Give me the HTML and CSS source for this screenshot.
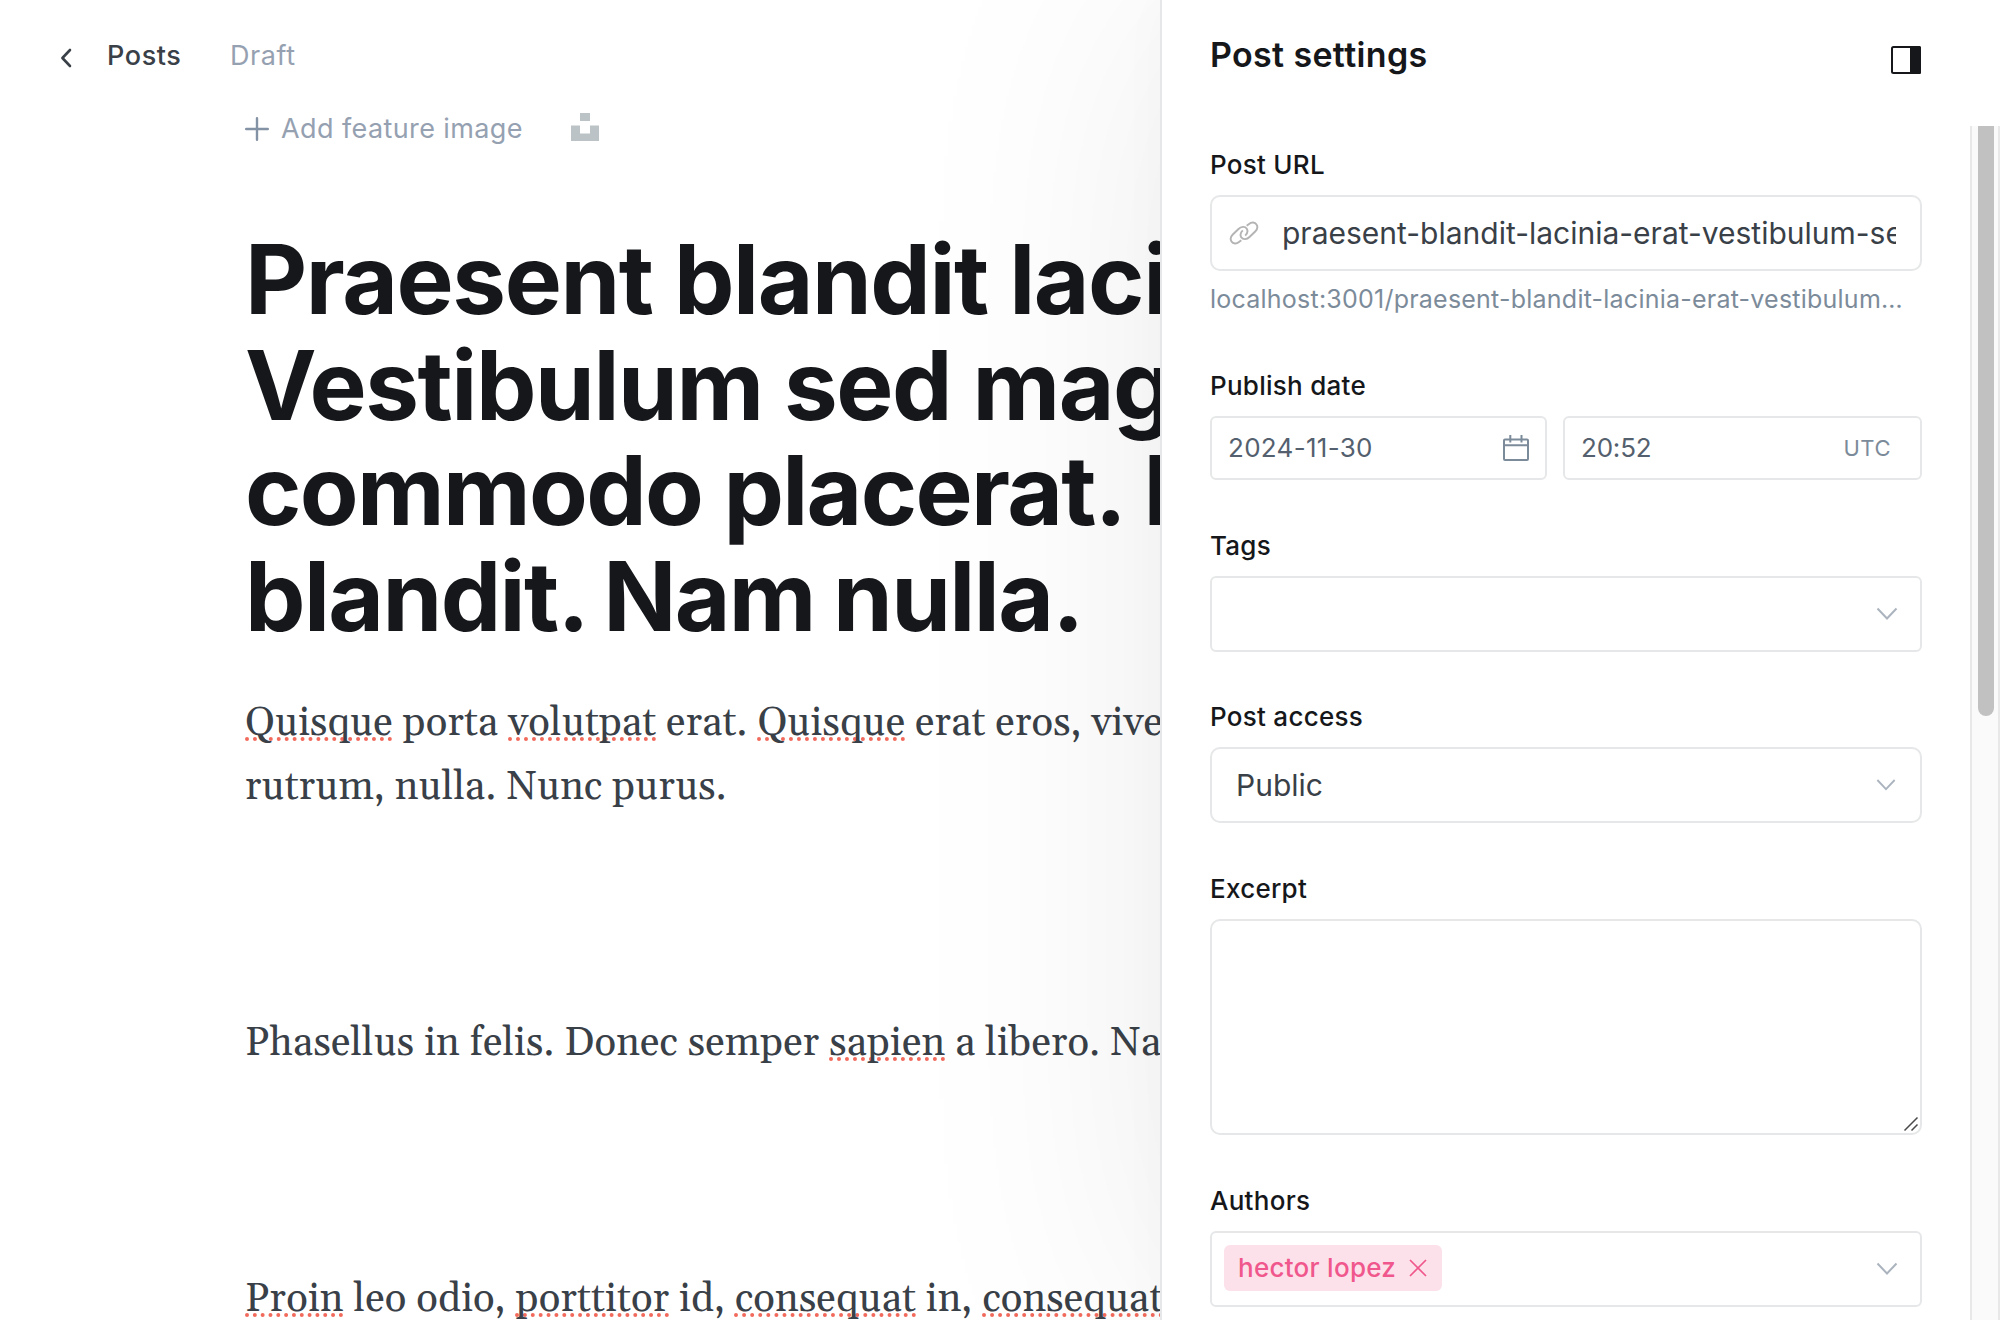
FILE: index.html
```html
<!DOCTYPE html>
<html lang="en">
<head>
<meta charset="utf-8">
<title>Post editor</title>
<link rel="stylesheet" href="styles.css">
</head>
<body>
<div class="app">
  <main class="editor">
    <header class="editor-nav">
      <svg class="back-icon" viewBox="0 0 12 20" width="12" height="20"><path d="M10 2 2.4 10l7.6 8"/></svg>
      <a class="nav-posts">Posts</a>
      <span class="nav-status">Draft</span>
    </header>
    <div class="canvas">
      <div class="feature-row">
        <svg class="plus-icon" viewBox="0 0 24 24" width="24" height="24"><path d="M12 1.2v21.6M1.2 12h21.6"/></svg>
        <span class="feature-label">Add feature image</span>
        <svg class="unsplash-icon" viewBox="0 0 28 28" width="28" height="28"><path d="M9 0h10v8H9zM0 12.5h9v8h10v-8h9V28H0z"/></svg>
      </div>
      <h1 class="title"><span class="loose">Praesent blandit lacinia erat.<br>Vestibulum sed magna at nunc</span><br>commodo placerat. Praesent<br><span class="snug">blandit. Nam nulla.</span></h1>
      <div class="body-text">
        <p><span class="misspelt">Quisque</span> porta <span class="misspelt">volutpat</span> erat. <span class="misspelt">Quisque</span> erat eros, viverra<br>rutrum, nulla. Nunc purus.</p>
        <p><br></p>
        <p>Phasellus in felis. Donec semper <span class="misspelt">sapien</span> a libero. Nam</p>
        <p><br></p>
        <p><span class="misspelt">Proin</span> leo odio, <span class="misspelt">porttitor</span> id, <span class="misspelt">consequat</span> in, <span class="misspelt">consequat</span></p>
      </div>
    </div>
  </main>

  <aside class="panel">
    <header class="panel-head">
      <h2 class="panel-title">Post settings</h2>
      <svg class="sidebar-icon" viewBox="0 0 30 28" width="30" height="28"><rect x="1" y="1" width="28" height="26" rx="1.5"/><path d="M20 1h8.500a.5.5 0 0 1 .5.5v25a.5.5 0 0 1-.5.5H20z"/></svg>
    </header>
    <div class="panel-scroll">
      <form class="fields">
        <div class="field">
          <label class="label">Post URL</label>
          <div class="control large round url">
            <svg class="link-icon" viewBox="-1 -1 30 24" width="30" height="24"><path d="M11.300 18.200 9 20C6.500 22.200 3 22 1.500 19.500 0 17.200.8 14.500 2.800 12.500L8.500 7C11 4.500 15 4 16.800 6.800 18 9 17.500 11.500 15.200 13.600"/><path d="M16.700 3.800 19 2C21.500-.2 25 0 26.500 2.500 28 4.800 27.200 7.500 25.200 9.500L19.500 15C17 17.500 13 18 11.200 15.200 10 13 10.500 10.500 12.800 8.400"/></svg>
            <span class="url-value">praesent-blandit-lacinia-erat-vestibulum-sed-magna</span>
          </div>
          <p class="hint">localhost:3001/praesent-blandit-lacinia-erat-vestibulum…</p>
        </div>
        <div class="field">
          <label class="label">Publish date</label>
          <div class="date-row">
            <div class="control small date">
              <span class="date-value">2024-11-30</span>
              <svg class="calendar-icon" viewBox="0 0 26 26" width="26" height="26"><rect x="1" y="4.500" width="24" height="20.500" rx="1"/><path d="M1 10.300h24M7.300 0v7.500M18.500 0v7.500"/></svg>
            </div>
            <div class="control small time">
              <span class="time-value">20:52</span>
              <span class="zone">UTC</span>
            </div>
          </div>
        </div>
        <div class="field tags">
          <label class="label">Tags</label>
          <div class="control large">
            <svg class="chevron" viewBox="0 0 22 14" width="22" height="14"><path d="M1.500 1.500 11 11.500l9.500-10"/></svg>
          </div>
        </div>
        <div class="field">
          <label class="label">Post access</label>
          <div class="control large round select">
            <span class="select-value">Public</span>
            <svg class="chevron" viewBox="0 0 22 14" width="20" height="14"><path d="M1.500 1.500 11 11.500l9.500-10"/></svg>
          </div>
        </div>
        <div class="field">
          <label class="label">Excerpt</label>
          <div class="control round area">
            <svg class="grip" viewBox="0 0 16 16" width="16" height="16"><path d="M1.500 14.500l13-13M8.500 14.500l6-6"/></svg>
          </div>
        </div>
        <div class="field">
          <label class="label">Authors</label>
          <div class="control large authors">
            <span class="token">hector lopez
              <svg class="token-close" viewBox="0 0 18 18" width="18" height="18"><path d="M1 1l16 16M17 1 1 17"/></svg>
            </span>
            <svg class="chevron" viewBox="0 0 22 14" width="22" height="14"><path d="M1.500 1.500 11 11.500l9.500-10"/></svg>
          </div>
        </div>
      </form>
      <div class="scrollbar"><div class="thumb"></div></div>
    </div>
  </aside>
</div>
</body>
</html>
```
FILE: styles.css
```css
* { box-sizing: border-box; }
body {
  margin: 0;
  font-family: Inter, "Liberation Sans", sans-serif;
  color: #15171a;
  background: #fff;
}
svg { display: block; fill: none; flex: none; }
h1, h2, p { margin: 0; }
.app {
  display: flex;
  width: 2000px;
  height: 1320px;
  overflow: hidden;
}

/* Editor */
.editor {
  width: 1160px;
  flex: none;
  overflow: hidden;
  white-space: nowrap;
}
.editor-nav {
  display: flex;
  align-items: center;
  height: 111px;
  padding-left: 60px;
  font-size: 27px;
  line-height: 1;
  letter-spacing: .6px;
}
.back-icon { stroke: #394047; stroke-width: 2.6; stroke-linecap: round; stroke-linejoin: round; margin: 5px 35px 0 0; }
.nav-posts { width: 123px; font-weight: 500; color: #394047; }
.nav-status { color: #95a1b1; }
.canvas { padding-left: 245px; }
.feature-row {
  display: flex;
  align-items: center;
  height: 34px;
  font-size: 27px;
  letter-spacing: .4px;
  color: #95a1b1;
}
.plus-icon { stroke: #8492a5; stroke-width: 2.4; stroke-linecap: round; margin-top: 1px; }
.feature-label { width: 290px; margin-left: 12px; }
.unsplash-icon { fill: #bbc3c6; margin-top: -2px; }
.title {
  margin-top: 82px;
  font-size: 96px;
  font-weight: 700;
  line-height: 105.6px;
  letter-spacing: -1.65px;
}
.title .loose { letter-spacing: -1.4px; }
.title .snug { letter-spacing: -1.6px; word-spacing: -3px; }
.body-text {
  margin-top: 43px;
  font-family: Gelasio, Georgia, "Liberation Serif", serif;
  font-size: 40px;
  line-height: 64px;
  letter-spacing: .19px;
  color: #394047;
}
.body-text p { margin-bottom: 64px; }
.misspelt {
  text-decoration: underline dotted #f26a5c 4px;
  text-underline-offset: 2px;
  text-decoration-skip-ink: none;
}

/* Settings panel */
.panel {
  position: relative;
  display: flex;
  flex-direction: column;
  width: 840px;
  flex: none;
  background: #fff;
  border-left: 2px solid #e6e7e8;
  box-shadow: 0 0 400px rgba(0, 0, 0, .08), 0 0 50px rgba(0, 0, 0, .022);
}
.panel-head {
  display: flex;
  justify-content: space-between;
  align-items: center;
  height: 126px;
  padding: 0 79px 16px 48px;
}
.panel-title { font-size: 34px; font-weight: 600; line-height: 40px; letter-spacing: .35px; }
.sidebar-icon { stroke: #15171a; stroke-width: 2; margin-top: 9px; }
.sidebar-icon path { fill: #15171a; }
.panel-scroll { display: flex; flex: 1; min-height: 0; }
.fields { width: 808px; padding: 26px 48px 0; }
.field { margin-bottom: 53px; }
.field.tags { margin-bottom: 52px; }
.label {
  display: block;
  margin-bottom: 17px;
  font-size: 26px;
  font-weight: 500;
  line-height: 26px;
  letter-spacing: .27px;
}
.control {
  display: flex;
  align-items: center;
  justify-content: flex-end;
  border: 2px solid #e6e7e8;
  border-radius: 6px;
  color: #394047;
}
.control.large { height: 76px; }
.control.small { height: 64px; justify-content: space-between; font-size: 26px; color: #54606e; padding-left: 16px; }
.control.round { border-radius: 10px; }
.url { justify-content: flex-start; padding: 0 24px 0 17px; font-size: 30px; }
.link-icon { stroke: #b4b4b4; stroke-width: 1.9; margin-right: 23px; }
.url-value { width: 614px; overflow: hidden; white-space: nowrap; line-height: 44px; }
.hint {
  height: 41px;
  margin-top: 8px;
  font-size: 25px;
  line-height: 40px;
  letter-spacing: .23px;
  color: #7c8b9a;
  white-space: nowrap;
}
.date-row { display: flex; justify-content: space-between; }
.date { width: 337px; padding-right: 16px; }
.time { width: 359px; padding-right: 29px; }
.date-value { letter-spacing: .3px; padding-bottom: 2px; }
.time-value { letter-spacing: -.2px; padding-bottom: 2px; }
.calendar-icon { stroke: #7c8b9a; stroke-width: 2; }
.zone { font-size: 22px; letter-spacing: .5px; color: #7c8b9a; }
.chevron { stroke: #abb4be; stroke-width: 2; margin-right: 22px; }
.select { justify-content: space-between; padding-left: 24px; font-size: 30px; }
.select-value { line-height: 40px; }
.select .chevron { margin-right: 24px; }
.area { height: 216px; align-items: flex-end; }
.grip { stroke: #4a4a4a; stroke-width: 1.5; margin: 0 1px 1px 0; }
.authors { justify-content: space-between; padding-left: 12px; }
.token {
  display: flex;
  align-items: center;
  justify-content: space-between;
  width: 218px;
  height: 46px;
  padding: 0 15px 2px 14px;
  border-radius: 6px;
  background: #fce1ea;
  color: #f0578c;
  font-size: 26px;
  letter-spacing: .27px;
  font-weight: 500;
}
.authors .token { margin-bottom: 2px; }
.token-close { stroke: #f0578c; stroke-width: 1.7; margin-top: 2px; }
.scrollbar {
  width: 30px;
  padding-left: 6px;
  background: #fafafa;
  border-left: 2px solid #e8e8e8;
  border-right: 2px solid #e8e8e8;
}
.thumb { width: 16px; height: 590px; background: #c1c1c1; border-radius: 0 0 8px 8px; }
```
